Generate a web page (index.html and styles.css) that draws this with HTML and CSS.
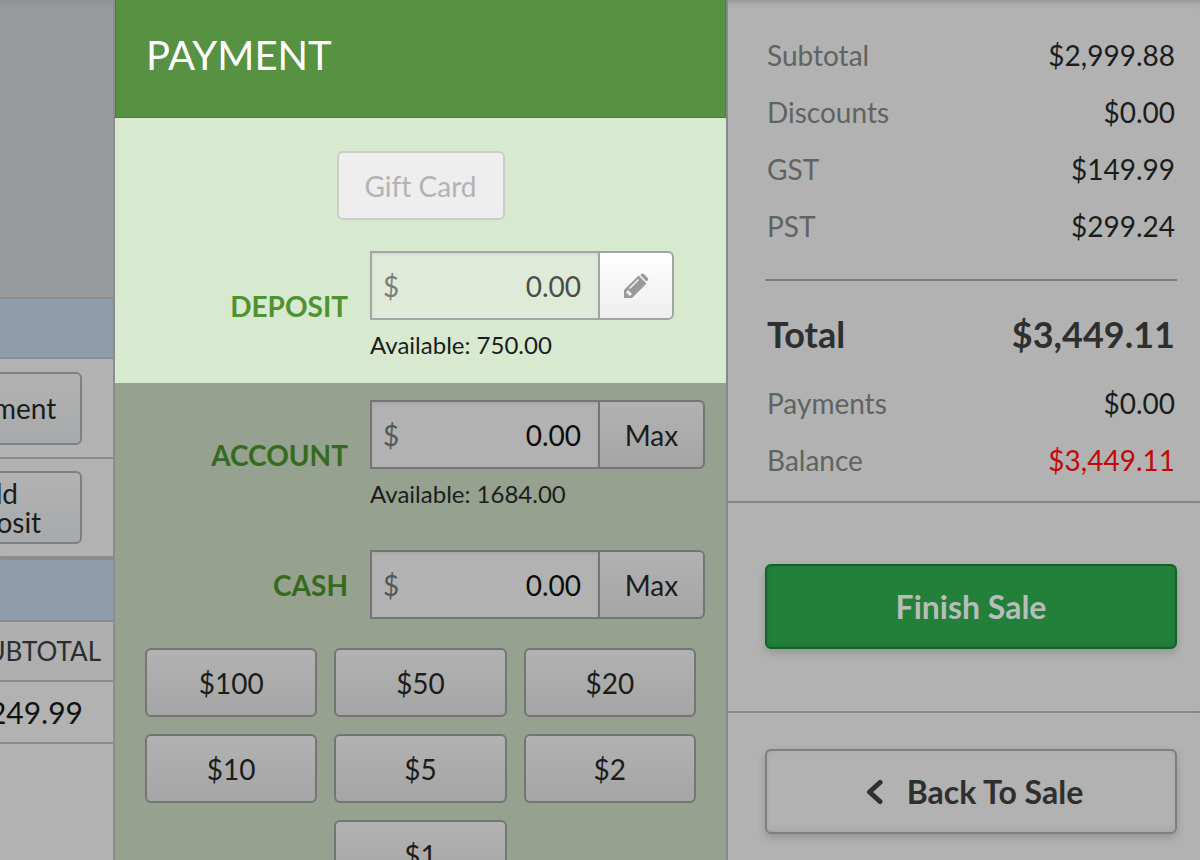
FILE: index.html
```html
<!DOCTYPE html>
<html lang="en">
<head>
    <meta charset="UTF-8">
    <meta name="viewport" content="width=device-width, initial-scale=1.0">
    <link rel="stylesheet" href="styles.css">
    <title>Payment</title>
</head>
<body>
    <div class="register">
        <aside class="sale">
            <div class="sale-top"></div>
            <div class="sale-bar"></div>
            <div class="sale-row">
                <button type="button" class="btn sale-btn">Statement</button>
            </div>
            <div class="sale-row">
                <button type="button" class="btn sale-btn">Add<br>Deposit</button>
            </div>
            <div class="sale-bar sale-bar-lines"></div>
            <table class="sale-lines">
                <thead>
                    <tr><th>SUBTOTAL</th></tr>
                </thead>
                <tbody>
                    <tr><td>$249.99</td></tr>
                </tbody>
            </table>
        </aside>

        <main class="payment">
            <h1 class="payment-title">PAYMENT</h1>

            <section class="payment-active">
                <button type="button" class="btn gift-btn" disabled>Gift Card</button>
                <div class="field">
                    <label for="deposit">DEPOSIT</label>
                    <div>
                        <div class="input-group active">
                            <span class="money">
                                <span class="currency">$</span>
                                <input type="text" id="deposit" value="0.00" readonly>
                            </span>
                            <button type="button" class="btn edit-btn" aria-label="Edit deposit">
                                <svg width="26" height="26" viewBox="0 0 26 26" fill="#999">
                                    <path fill-rule="evenodd" d="M1 25v-8L15.500 2.500l8 8L9 25zM3.500 18.500v2h2v2h2L9 21l-4-4zM7 16l9-9-1-1-9 9z"/>
                                    <path d="M16.800 2.200l1.700-1.600q1.200-1 2.400 0l4.300 4.300q1.200 1.200 0 2.400l-1.700 1.700z" stroke="#f9f9f9" stroke-width="1"/>
                                </svg>
                            </button>
                        </div>
                        <p class="available">Available: 750.00</p>
                    </div>
                </div>
            </section>

            <section class="payment-methods">
                <div class="field">
                    <label for="account">ACCOUNT</label>
                    <div>
                        <div class="input-group">
                            <span class="money">
                                <span class="currency">$</span>
                                <input type="text" id="account" value="0.00">
                            </span>
                            <button type="button" class="btn max-btn">Max</button>
                        </div>
                        <p class="available">Available: 1684.00</p>
                    </div>
                </div>
                <div class="field">
                    <label for="cash">CASH</label>
                    <div class="input-group">
                        <span class="money">
                            <span class="currency">$</span>
                            <input type="text" id="cash" value="0.00">
                        </span>
                        <button type="button" class="btn max-btn">Max</button>
                    </div>
                </div>
                <div class="quick-cash">
                    <button type="button" class="btn">$100</button>
                    <button type="button" class="btn">$50</button>
                    <button type="button" class="btn">$20</button>
                    <button type="button" class="btn">$10</button>
                    <button type="button" class="btn">$5</button>
                    <button type="button" class="btn">$2</button>
                    <button type="button" class="btn last">$1</button>
                </div>
            </section>
        </main>

        <aside class="summary">
            <dl class="totals">
                <div class="line"><dt>Subtotal</dt><dd>$2,999.88</dd></div>
                <div class="line"><dt>Discounts</dt><dd>$0.00</dd></div>
                <div class="line"><dt>GST</dt><dd>$149.99</dd></div>
                <div class="line"><dt>PST</dt><dd>$299.24</dd></div>
                <div class="line total"><dt>Total</dt><dd>$3,449.11</dd></div>
                <div class="line"><dt>Payments</dt><dd>$0.00</dd></div>
                <div class="line balance"><dt>Balance</dt><dd>$3,449.11</dd></div>
            </dl>
            <div class="finish">
                <button type="button" class="big-btn finish-btn">Finish Sale</button>
            </div>
            <div class="back">
                <button type="button" class="big-btn back-btn">
                    <svg width="18" height="26" viewBox="0 0 18 26" fill="none" stroke="#2d302f" stroke-width="5" stroke-linecap="round" stroke-linejoin="round">
                        <path d="M15 3.500L4.500 13l10.500 9.500"/>
                    </svg>
                    Back To Sale
                </button>
            </div>
        </aside>
    </div>
</body>
</html>
```

FILE: styles.css
```css
* {
    box-sizing: border-box;
}

body {
    margin: 0;
    background: #b2b2b2;
    font-family: Lato, sans-serif;
    font-size: 28px;
    font-variant-ligatures: none;
    color: #1b1d1c;
    overflow: hidden;
}

button,
input {
    font: inherit;
    color: inherit;
}

.register {
    display: grid;
    grid-template-columns: 115fr 611fr 474fr;
    height: 100vh;
    box-shadow: inset 0 8px 8px -8px rgba(0, 0, 0, 0.3);
}

.btn {
    height: 69px;
    padding: 0;
    border: 2px solid #747577;
    border-radius: 6px;
    background: linear-gradient(#b2b2b2, #a5a5a5);
}

/* Sale behind the payment panel */
.sale {
    min-width: 0;
    overflow: hidden;
    border-right: 2px solid #8b8c8d;
}

.sale-top {
    height: 297px;
    background: linear-gradient(#8f9396, #989c9f 10px);
}

.sale-bar {
    height: 62px;
    background: #8f9ca9;
    border-top: 2px solid #8b8c8d;
    border-bottom: 2px solid #8b8c8d;
}

.sale-bar-lines {
    height: 66px;
    border-top-width: 4px;
}

.sale-row {
    display: flex;
    justify-content: flex-end;
    padding: 13px 31px 12px 0;
}

.sale-row + .sale-row {
    border-top: 2px solid #8b8c8d;
    padding-top: 12px;
}

.sale-btn {
    flex: none;
    width: 178px;
    height: 73px;
    border-color: #7b8285;
    background: linear-gradient(#b2b2b2, #a7a9ab);
    line-height: 29px;
}

.sale-lines {
    float: right;
    width: 178px;
    border-collapse: collapse;
    text-align: right;
}

.sale-lines th,
.sale-lines td {
    height: 59px;
    padding: 0 12px 0 0;
    border-bottom: 2px solid #8b8c8d;
    font-size: 26px;
    font-weight: normal;
    color: #2b2d2e;
    background: #afafaf;
}

.sale-lines td {
    height: 62px;
    padding-right: 30px;
    font-size: 30px;
    color: #111;
    background: #b2b2b2;
}

/* Payment panel */
.payment {
    display: flex;
    flex-direction: column;
    min-width: 0;
    overflow: hidden;
    background: #96a18f;
}

.payment-title {
    flex: none;
    margin: 0;
    padding: 30px 30px 37px;
    border: 1px solid #44861f;
    border-top: 0;
    background: #579142;
    color: #fff;
    font-size: 40px;
    font-weight: normal;
    line-height: 50px;
}

.payment-active {
    padding: 33px 30px 22px;
    background: #d7e9cf;
}

.gift-btn {
    display: block;
    width: 168px;
    margin: 0 auto 31px;
    border-color: #ccc;
    background: #eee;
    color: #b3b3b3;
}

.field {
    display: grid;
    grid-template-columns: 203px 1fr;
    gap: 22px;
    align-items: center;
}

.field label {
    color: #356a20;
    font-weight: bold;
    text-align: right;
}

.payment-active label {
    color: #4f922f;
}

.input-group {
    display: flex;
}

.money {
    display: flex;
    align-items: center;
    width: 230px;
    height: 69px;
    padding: 0 17px 0 11px;
    border: 2px solid #747577;
    background: #b2b2b2;
    box-shadow: inset 0 2px 3px rgba(0, 0, 0, 0.06);
}

.currency {
    color: #555857;
}

.money input {
    flex: 1;
    min-width: 0;
    padding: 0;
    border: 0;
    outline: 0;
    background: none;
    color: #0b0b0b;
    text-align: right;
}

.max-btn,
.edit-btn {
    width: 107px;
    margin-left: -2px;
    border-radius: 0 6px 6px 0;
}

.edit-btn {
    display: flex;
    align-items: center;
    justify-content: center;
    width: 76px;
    border-color: #a3a4a6;
    background: linear-gradient(#fff, #eee);
}

.active .money {
    border-color: #a3a4a6;
    background: #dfead9;
}

.active .currency {
    color: #7b7e7c;
}

.active input {
    color: #4a4d4b;
}

.available {
    margin: 0;
    padding-top: 9px;
    font-size: 24px;
    line-height: 32px;
}

.payment-methods {
    padding: 17px 30px;
}

.payment-methods .field + .field {
    margin-top: 40px;
}

.quick-cash {
    display: grid;
    grid-template-columns: repeat(3, 1fr);
    gap: 17px;
    margin-top: 29px;
}

.quick-cash .last {
    grid-column: 2;
}

/* Summary */
.summary {
    min-width: 0;
    border-left: 2px solid #85898b;
}

.totals {
    margin: 0;
    padding: 27px 23px 12px 37px;
    border-bottom: 2px solid #848988;
}

.line {
    display: flex;
    justify-content: space-between;
    padding: 0 2px;
    line-height: 57px;
}

.line dt {
    color: #5f6462;
}

.line dd {
    margin: 0;
}

.line.total {
    margin-top: 24px;
    padding-top: 12px;
    border-top: 2px solid #7b807f;
    font-size: 36px;
    font-weight: bold;
    line-height: 82px;
}

.total dt,
.total dd {
    color: #2d302f;
}

.balance dd {
    color: #c00a0a;
}

.finish {
    padding: 61px 23px 62px 37px;
    border-bottom: 2px solid #848988;
}

.back {
    padding: 36px 23px 26px 37px;
}

.big-btn {
    display: flex;
    align-items: center;
    justify-content: center;
    gap: 24px;
    width: 100%;
    height: 85px;
    padding: 0;
    border: 2px solid #7b807f;
    border-radius: 6px;
    background: #b2b2b2;
    box-shadow: 0 4px 8px rgba(0, 0, 0, 0.16), inset 0 -2px 6px rgba(0, 0, 0, 0.08);
    color: #2d302f;
    font-size: 32px;
    font-weight: bold;
}

.back-btn {
    padding-left: 6px;
}

.finish-btn {
    border-color: #0e6424;
    background: #23803b;
    color: #b9bdb9;
}
```
